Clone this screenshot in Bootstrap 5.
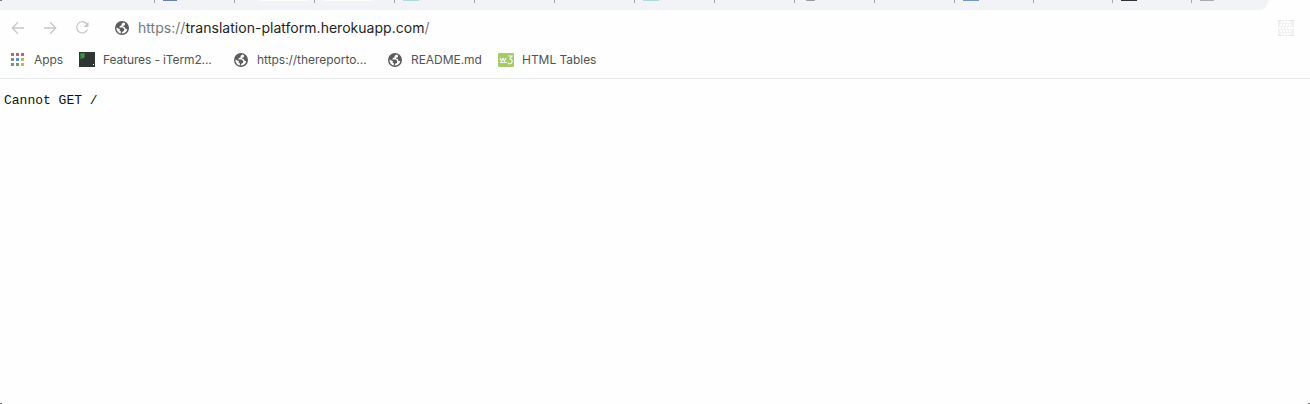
<!DOCTYPE html>
<html lang="en"><head><meta charset="utf-8"><meta name="viewport" content="width=device-width, initial-scale=1"><title>Error</title>
<link rel="stylesheet" href="https://cdn.jsdelivr.net/npm/bootstrap@5.3.0/dist/css/bootstrap.min.css">
<script src="https://cdn.jsdelivr.net/npm/bootstrap@5.3.0/dist/js/bootstrap.bundle.min.js" defer></script>
<style>
body{font-family:Inter,"Liberation Sans",sans-serif;background:#fefefe;overflow:hidden}
.window{height:404px}
.strip{height:10px;background:#f2f3f7;width:1269px;clip-path:polygon(0 0,100% 0,1268px 3px,1265px 8px,1262px 10px,0 10px)}
.tab{flex:none;width:80px;height:3px;border-left:1px solid #a5a6a9;padding-left:8px}
.tab.first{width:154px;border:0;padding:0}
.tab.slim{width:79px}
.fav{display:block;width:14px;height:1px}
.fav.wide{width:16px}
.blur-line{display:block;width:50px;height:1px;background:#fcfcfd}
.corner{width:2px;height:1px;background:#777}
.address{height:36px;padding-left:10px}
.url{font-size:14px;line-height:20px;color:#77797c;white-space:nowrap;letter-spacing:.025px}
.url b{font-weight:400;color:#242528}
.marks{height:33px;padding:0 0 5px 11px;border-bottom:1px solid #e6e7e8}
.mk{font-size:12px;line-height:18px;color:#525355;white-space:nowrap;letter-spacing:-.04px}
.mk.tight{letter-spacing:-.12px}
svg{flex:none;display:block}
.message{font:13px/15px "Liberation Mono",monospace;color:#111;margin:14px 0 0 4px}
.edge{height:1px}
</style></head><body>
<svg width="0" height="0" class="position-absolute"><symbol id="globe" viewBox="0 0 14 14"><circle cx="7" cy="7" r="7" fill="#5b5c5e"/><path d="M8.4 1.4 6.4 3 6.8 4.2 4.6 5.2 4.5 6.4 7.9 6.6 9.3 8.2 8.9 9.9 7.3 10.7 6.6 12.5C9.7 12.6 11.8 10.8 12.3 8.3L10.5 7.8 9.6 6 7.8 5.6 8.2 4.7 9.9 4.3 10 2.2ZM1.4 6.4C1.2 9.3 3 11.8 5.6 12.4L6 10.6 4.5 9.6 5 8.3Z" fill="#fff"/></symbol></svg>
<div class="window d-flex flex-column">
<div class="strip d-flex align-items-start">
<div class="tab first"><i class="corner d-block"></i></div>
<div class="tab"><i class="fav" style="background:#6a7fac"></i></div><div class="tab"><i class="blur-line ms-3"></i></div><div class="tab"><i class="blur-line"></i></div>
<div class="tab"><i class="fav wide" style="background:#b5d9df"></i></div><div class="tab"></div><div class="tab"></div>
<div class="tab"><i class="fav wide" style="background:#b5d9df"></i></div><div class="tab"></div>
<div class="tab"><i class="fav rounded-bottom" style="background:#999;width:9px;margin-left:3px"></i></div><div class="tab"></div>
<div class="tab slim"><i class="fav wide" style="background:#7693c5"></i></div><div class="tab slim"></div>
<div class="tab slim"><i class="fav wide" style="background:#303136"></i></div><div class="tab slim"><i class="fav" style="background:#aaa"></i></div>
</div>
<div class="address d-flex align-items-center">
<svg width="97" height="16" viewBox="0 0 97 16" fill="none" stroke="#c6c7c8" stroke-width="1.3"><path d="M14 8H2.5M8 2.3 2.3 8 8 13.7M34 8h11.5M40 2.3 45.7 8 40 13.7M77 4.2A5.6 5.6 0 1 0 77.5 9.5"/><path d="M78.5 2v5h-5z" fill="#c6c7c8" stroke="none"/></svg>
<svg class="ms-2" width="14" height="14"><use href="#globe"/></svg>
<div class="url" style="margin-left:9px">https://<b>translation-platform.herokuapp.com</b>/</div>
<svg class="ms-auto me-3" width="16" height="16" viewBox="0 0 16 16"><path d="M0 0h16v16H0z" fill="#f1f1f1"/><path d="M3 2h10M2 5h12M1 8h14M2 11h12M3 14h10" stroke="#fff" stroke-width="1.8" stroke-dasharray="2 1"/><path d="M0 .5h4M0 0v4M12 .5h4M16 0v4M0 15.5h4M12 15.5h4" stroke="#e5e5e5"/></svg>
</div>
<div class="marks d-flex align-items-center">
<svg width="14" height="14" viewBox="0 0 14 14"><g fill="#b16c70"><path d="M0 0h3v3H0zM5 0h3v3H5zM10 0h3v3h-3z"/></g><path d="M0 5h3v3H0zM0 10h3v3H0zM5 10h3v3H5z" fill="#6e9b78"/><path d="M5 5h3v3H5z" fill="#608fbd"/><path d="M10 5h3v3h-3zM10 10h3v3h-3z" fill="#c9b25e"/></svg>
<div class="mk" style="margin-left:9px;width:45px">Apps</div>
<svg width="16" height="15" viewBox="0 0 16 15"><path d="M0 0h16v15H0z" fill="#303633"/><path d="M1 1h5v4l-3 2H1z" fill="#39713c"/><path d="M2 3h3M3 5h2" stroke="#55b457"/><path d="M14 12h1v1h-1z" fill="#fff"/></svg>
<div class="mk tight" style="margin-left:8px;width:131px">Features - iTerm2...</div>
<svg width="14" height="14"><use href="#globe"/></svg><div class="mk" style="margin-left:9px;width:131px">https://thereporto...</div>
<svg width="14" height="14"><use href="#globe"/></svg><div class="mk" style="margin-left:9px;width:87px">README.md</div>
<svg width="16" height="14" viewBox="0 0 16 14"><rect width="16" height="14" rx="1" fill="#a5c96b"/><path d="m2 5 1.5 3L5 5.5 6.5 8 8 5M2 9.5h7M10 3h4l-2 3c3 0 3 5-1 5l-1-1" fill="none" stroke="#f4f9e9" stroke-width="1.2"/></svg>
<div class="mk" style="margin-left:8px">HTML Tables</div>
</div>
<pre class="message">Cannot GET /</pre>
<div class="edge mt-auto d-flex justify-content-between"><i class="corner"></i><i class="corner"></i></div>
</div>
</body></html>
